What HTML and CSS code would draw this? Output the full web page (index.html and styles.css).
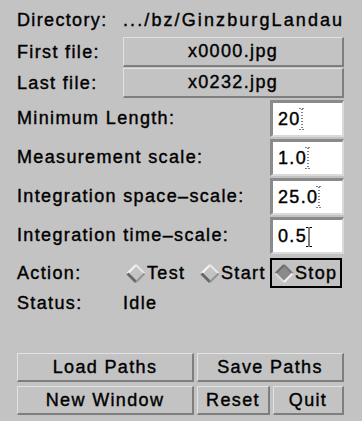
FILE: index.html
```html
<!DOCTYPE html>
<html>
<head>
<meta charset="utf-8">
<link rel="stylesheet" href="styles.css">
</head>
<body>
<div class="panel">
  <div class="row r-dir">
    <span class="label">Directory:</span>
    <span class="value dir-value">.../bz/GinzburgLandau</span>
  </div>
  <div class="row r-file r-first">
    <span class="label">First file:</span>
    <div class="btn file-btn">x0000.jpg</div>
  </div>
  <div class="row r-file r-last">
    <span class="label">Last file:</span>
    <div class="btn file-btn">x0232.jpg</div>
  </div>
  <div class="row r-field">
    <span class="label">Minimum Length:</span>
    <div class="field"><span>20</span><svg class="cursor" width="6" height="22" viewBox="0 0 6 22"><path d="M0.5 0.5h5M3 1v20M0.5 21.5h5" stroke="#000" stroke-width="1" stroke-dasharray="1 2" fill="none"/></svg></div>
  </div>
  <div class="row r-field">
    <span class="label">Measurement scale:</span>
    <div class="field"><span>1.0</span><svg class="cursor" width="6" height="22" viewBox="0 0 6 22"><path d="M0.5 0.5h5M3 1v20M0.5 21.5h5" stroke="#000" stroke-width="1" stroke-dasharray="1 2" fill="none"/></svg></div>
  </div>
  <div class="row r-field">
    <span class="label">Integration space–scale:</span>
    <div class="field"><span>25.0</span><svg class="cursor" width="6" height="22" viewBox="0 0 6 22"><path d="M0.5 0.5h5M3 1v20M0.5 21.5h5" stroke="#000" stroke-width="1" stroke-dasharray="1 2" fill="none"/></svg></div>
  </div>
  <div class="row r-field">
    <span class="label">Integration time–scale:</span>
    <div class="field"><span>0.5</span><svg class="cursor active" width="6" height="20" viewBox="0 0 6 20"><path d="M0 0.5h2.5M3.5 0.5h2.5M3 1v18M0 19.5h2.5M3.5 19.5h2.5" stroke="#000" stroke-width="1" fill="none"/></svg></div>
  </div>
  <div class="row r-action">
    <span class="label">Action:</span>
    <div class="radios">
      <div class="radio">
        <svg class="dia" width="20" height="21" viewBox="0 0 20 21">
          <path d="M1.5 10.5L10 2" stroke="#f4f4f4" stroke-width="2.2" fill="none"/>
          <path d="M10 2L18.5 10.5" stroke="#e6e6e6" stroke-width="2.2" fill="none"/>
          <path d="M1.5 10.5L10 19" stroke="#666" stroke-width="2.8" fill="none"/>
          <path d="M10 19L18.5 10.5" stroke="#959595" stroke-width="2.2" fill="none"/>
        </svg>
        <span>Test</span>
      </div>
      <div class="radio">
        <svg class="dia" width="20" height="21" viewBox="0 0 20 21">
          <path d="M1.5 10.5L10 2" stroke="#f4f4f4" stroke-width="2.2" fill="none"/>
          <path d="M10 2L18.5 10.5" stroke="#e6e6e6" stroke-width="2.2" fill="none"/>
          <path d="M1.5 10.5L10 19" stroke="#666" stroke-width="2.8" fill="none"/>
          <path d="M10 19L18.5 10.5" stroke="#959595" stroke-width="2.2" fill="none"/>
        </svg>
        <span>Start</span>
      </div>
      <div class="radio selected">
        <svg class="dia" width="20" height="21" viewBox="0 0 20 21">
          <path d="M1.5 10.5L10 2L18.5 10.5L10 19Z" fill="#8a8a8a"/>
          <path d="M1.5 10.5L10 2" stroke="#6c6c6c" stroke-width="2.2" fill="none"/>
          <path d="M10 2L18.5 10.5" stroke="#7a7a7a" stroke-width="2.2" fill="none"/>
          <path d="M1.5 10.5L10 19" stroke="#d8d8d8" stroke-width="2.2" fill="none"/>
          <path d="M10 19L18.5 10.5" stroke="#f0f0f0" stroke-width="2.2" fill="none"/>
        </svg>
        <span>Stop</span>
      </div>
    </div>
  </div>
  <div class="row r-status">
    <span class="label">Status:</span>
    <span class="value">Idle</span>
  </div>
  <div class="buttons">
    <div class="btnrow">
      <div class="btn b-wide">Load Paths</div>
      <div class="btn b-fill">Save Paths</div>
    </div>
    <div class="btnrow second">
      <div class="btn b-wide">New Window</div>
      <div class="btn b-reset">Reset</div>
      <div class="btn b-fill">Quit</div>
    </div>
  </div>
</div>
</body>
</html>
```

FILE: styles.css
```css
html, body {
  margin: 0;
  padding: 0;
}
body {
  width: 362px;
  height: 421px;
  background: #c3c3c3;
  font-family: "Liberation Sans", Arial, sans-serif;
  font-size: 18px;
  letter-spacing: 1.35px;
  color: #000;
  -webkit-text-stroke: 0.4px #000;
  overflow: hidden;
}
.panel {
  padding: 5px 18px 0 17px;
  display: flex;
  flex-direction: column;
}
.row {
  display: grid;
  grid-template-columns: 105px 1fr;
  align-items: center;
}
.label {
  white-space: nowrap;
}
.value {
  padding-left: 1px;
  white-space: nowrap;
}
.dir-value {
  letter-spacing: 2.1px;
}
.r-dir { height: 30px; }
.r-file { height: 30px; }
.r-first { margin-top: 2px; }
.r-last { margin-top: 1px; }
.r-field { height: 37px; margin-top: 2px; }
.r-action { height: 30px; margin-top: 4px; }
.r-status { height: 28px; margin-top: 1px; }

.btn {
  box-sizing: border-box;
  height: 100%;
  background: #c3c3c3;
  border-style: solid;
  border-width: 1px 2px 2px 1px;
  border-color: #e2e2e2 #7e7e7e #7e7e7e #e2e2e2;
  display: flex;
  align-items: center;
  justify-content: center;
  white-space: nowrap;
}
.file-btn {
  margin-left: 1px;
}

.field {
  justify-self: end;
  box-sizing: border-box;
  width: 74px;
  height: 100%;
  background: #fff;
  border-style: solid;
  border-width: 3px 2px 2px 3px;
  border-color: #8a8a8a #dadada #dadada #8a8a8a;
  padding-left: 5px;
  display: flex;
  align-items: center;
}
.cursor {
  margin-left: -2px;
  margin-top: -1px;
}
.cursor.active {
  margin-left: -1px;
  margin-top: 2px;
}

.radios {
  display: flex;
  gap: 2px;
  height: 100%;
}
.radio {
  box-sizing: border-box;
  width: 72px;
  height: 100%;
  border: 2px solid transparent;
  padding-left: 2px;
  display: flex;
  align-items: center;
  gap: 1px;
  white-space: nowrap;
}
.radio.selected {
  border-color: #000;
}
.dia {
  flex: none;
}

.buttons {
  margin-top: 36px;
  display: flex;
  flex-direction: column;
}
.btnrow {
  display: flex;
  gap: 3px;
  height: 29px;
}
.btnrow.second {
  margin-top: 4px;
}
.b-wide { width: 177px; flex: none; }
.b-reset { width: 73px; flex: none; }
.b-fill { flex: 1; }
```
